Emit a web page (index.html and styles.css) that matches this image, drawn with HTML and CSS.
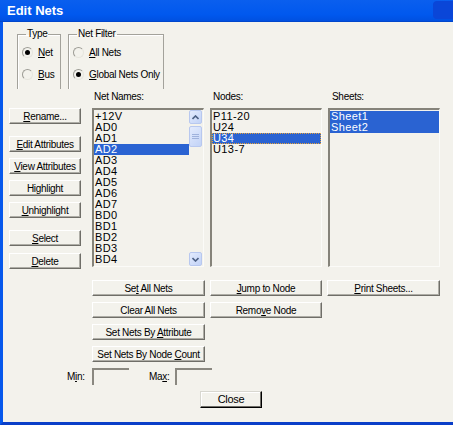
FILE: index.html
```html
<!DOCTYPE html>
<html>
<head>
  <link rel="stylesheet" href="styles.css">
</head>
<body>
  <div class="window">
    <div class="titlebar">
      <span class="title">Edit Nets</span>
      <span class="title-corner"></span>
    </div>

    <div class="client">
      <div class="filters">
        <fieldset class="group group-type">
          <legend>Type</legend>
          <label class="radio-row"><span class="radio checked"></span><span><u>N</u>et</span></label>
          <label class="radio-row"><span class="radio"></span><span><u>B</u>us</span></label>
        </fieldset>
        <fieldset class="group group-filter">
          <legend>Net Filter</legend>
          <label class="radio-row"><span class="radio"></span><span><u>A</u>ll Nets</span></label>
          <label class="radio-row"><span class="radio checked"></span><span><u>G</u>lobal Nets Only</span></label>
        </fieldset>
      </div>

      <div class="main">
        <div class="side">
          <button class="btn side-rename"><u>R</u>ename...</button>
          <button class="btn side-edit"><u>E</u>dit Attributes</button>
          <button class="btn side-view"><u>V</u>iew Attributes</button>
          <button class="btn side-highlight">Highlight</button>
          <button class="btn side-unhighlight"><u>U</u>nhighlight</button>
          <button class="btn side-select"><u>S</u>elect</button>
          <button class="btn side-delete"><u>D</u>elete</button>
        </div>

        <div class="work">
          <div class="lists">
            <div class="list-col">
              <div class="list-label">Net Names:</div>
              <div class="listbox has-scroll">
                <div class="rows">
                  <div class="row">+12V</div>
                  <div class="row">AD0</div>
                  <div class="row">AD1</div>
                  <div class="row selected">AD2</div>
                  <div class="row">AD3</div>
                  <div class="row">AD4</div>
                  <div class="row">AD5</div>
                  <div class="row">AD6</div>
                  <div class="row">AD7</div>
                  <div class="row">BD0</div>
                  <div class="row">BD1</div>
                  <div class="row">BD2</div>
                  <div class="row">BD3</div>
                  <div class="row">BD4</div>
                </div>
                <div class="scrollbar">
                  <div class="sb-btn">
                    <svg width="7" height="5" viewBox="0 0 7 5"><path d="M0.5 4 L3.5 1 L6.5 4" fill="none" stroke="#4d6185" stroke-width="1.6"/></svg>
                  </div>
                  <div class="sb-thumb">
                    <svg width="7" height="6" viewBox="0 0 7 6"><path d="M0 0.5H7M0 2.5H7M0 4.5H7" stroke="#9fb2dc" stroke-width="1"/></svg>
                  </div>
                  <div class="sb-track"></div>
                  <div class="sb-btn">
                    <svg width="7" height="5" viewBox="0 0 7 5"><path d="M0.5 1 L3.5 4 L6.5 1" fill="none" stroke="#4d6185" stroke-width="1.6"/></svg>
                  </div>
                </div>
              </div>
            </div>
            <div class="list-col">
              <div class="list-label">Nodes:</div>
              <div class="listbox">
                <div class="rows">
                  <div class="row">P11-20</div>
                  <div class="row">U24</div>
                  <div class="row selected focused">U34</div>
                  <div class="row">U13-7</div>
                </div>
              </div>
            </div>
            <div class="list-col">
              <div class="list-label">Sheets:</div>
              <div class="listbox">
                <div class="rows">
                  <div class="row selected">Sheet1</div>
                  <div class="row selected">Sheet2</div>
                </div>
              </div>
            </div>
          </div>

          <div class="actions">
            <button class="btn">Se<u>t</u> All Nets</button>
            <button class="btn"><u>J</u>ump to Node</button>
            <button class="btn"><u>P</u>rint Sheets...</button>
            <button class="btn">Clear All Nets</button>
            <button class="btn">Remo<u>v</u>e Node</button>
            <span></span>
            <button class="btn">Set Nets By <u>A</u>ttribute</button>
            <span></span><span></span>
            <button class="btn">Set Nets By Node <u>C</u>ount</button>
          </div>
        </div>
      </div>

      <div class="range">
        <span class="range-label">M<u>i</u>n:</span>
        <div class="edit"></div>
        <span class="range-label range-max">Ma<u>x</u>:</span>
        <div class="edit"></div>
      </div>

      <div class="footer">
        <button class="btn btn-default">Close</button>
      </div>
    </div>
  </div>
</body>
</html>
```

FILE: styles.css
```css
* {
  box-sizing: border-box;
  margin: 0;
  padding: 0;
}

body {
  width: 453px;
  height: 425px;
  overflow: hidden;
  font-family: "Liberation Sans", Arial, sans-serif;
  font-size: 10px;
  letter-spacing: -0.3px;
  color: #000;
  background: #f3f2ec;
}

.window {
  width: 453px;
  height: 425px;
  display: flex;
  flex-direction: column;
}

/* title bar */
.titlebar {
  height: 22px;
  flex: 0 0 22px;
  position: relative;
  background: linear-gradient(#0a5fee 0%, #0058ee 70%, #0050e0 100%);
  border-bottom: 1px solid #0046cc;
  display: flex;
  align-items: center;
}

.title {
  margin-left: 7px;
  color: #fff;
  font-weight: bold;
  font-size: 13px;
  letter-spacing: 0;
}

.title-corner {
  position: absolute;
  right: 0;
  top: 1px;
  width: 20px;
  height: 18px;
  background: #0a46d8;
  border-radius: 4px 0 0 4px;
}

/* client area */
.client {
  flex: 1;
  border-left: 3px solid #0658ec;
  border-bottom: 3px solid #0a3ec8;
  padding-left: 6px;
}

.filters {
  display: flex;
  gap: 7px;
  margin: 6px 0 0 8px;
  height: 61px;
}

.group {
  border: 1px solid #a3a29b;
  border-bottom: none;
  box-shadow: inset 1px 1px 0 #fff;
  padding: 6px 0 0 4px;
}

.group legend {
  margin-left: 4px;
  padding: 0 1px;
  line-height: 12px;
}

.group-type {
  width: 44px;
}

.group-filter {
  width: 96px;
}

.radio-row {
  display: flex;
  align-items: center;
  gap: 5px;
  height: 12px;
  margin-bottom: 10px;
  white-space: nowrap;
}

.radio {
  flex: 0 0 11px;
  width: 11px;
  height: 11px;
  border-radius: 50%;
  border: 1px solid #9d9c95;
  border-right-color: #e6e5de;
  border-bottom-color: #e6e5de;
  position: relative;
}

.radio.checked::after {
  content: "";
  position: absolute;
  left: 2px;
  top: 2px;
  width: 5px;
  height: 5px;
  border-radius: 50%;
  background: #000;
}

/* main */
.main {
  display: flex;
  gap: 11px;
}

.side {
  width: 72px;
  display: flex;
  flex-direction: column;
  padding-top: 19px;
}

.btn {
  font-family: "Liberation Sans", Arial, sans-serif;
  font-size: 10px;
  letter-spacing: -0.3px;
  height: 16px;
  line-height: 13px;
  background: #f3f2ec;
  color: #000;
  border: 1px solid;
  border-color: #fff #6f6e68 #6f6e68 #fff;
  box-shadow: inset -1px -1px 0 #aeada6;
  text-align: center;
  white-space: nowrap;
  overflow: hidden;
}

.side-edit { margin-top: 12px; }
.side-view,
.side-highlight,
.side-unhighlight { margin-top: 6px; }
.side-select { margin-top: 12px; }
.side-delete { margin-top: 7px; }

.work {
  width: 350px;
}

.lists {
  display: flex;
  gap: 6px;
}

.list-col {
  width: 112px;
}

.list-label {
  height: 12px;
  line-height: 12px;
  padding-left: 2px;
  margin-top: 2px;
  margin-bottom: 5px;
}

.list-col:nth-child(2) .list-label { padding-left: 3px; }
.list-col:nth-child(3) .list-label { padding-left: 4px; }

.listbox {
  height: 159px;
  border: 2px solid;
  border-color: #85837a #fbfbf8 #fbfbf8 #85837a;
  border-width: 2px 1px 1px 2px;
  display: flex;
  overflow: hidden;
}

.rows {
  flex: 1;
  padding-top: 1px;
  font-size: 11px;
  letter-spacing: 0.4px;
}

.row {
  height: 11px;
  line-height: 11px;
  padding-left: 1px;
  white-space: nowrap;
}

.row.selected {
  background: #2a63d2;
  color: #fff;
}

.row.focused {
  outline: 1px dotted #e6a23a;
  outline-offset: -1px;
}

/* scrollbar */
.scrollbar {
  width: 13px;
  margin-right: 1px;
  display: flex;
  flex-direction: column;
}

.sb-btn,
.sb-thumb {
  height: 14px;
  border: 1px solid #b8c8ef;
  border-radius: 2px;
  background: linear-gradient(135deg, #e3ebfd, #c2d3f7);
  display: flex;
  align-items: center;
  justify-content: center;
}

.sb-thumb {
  height: 21px;
  margin-top: 2px;
}

.sb-track {
  flex: 1;
}

.actions {
  display: grid;
  grid-template-columns: 113px 112px 113px;
  grid-auto-rows: 16px;
  column-gap: 5px;
  row-gap: 6px;
  margin-top: 13px;
}

.range {
  display: flex;
  align-items: center;
  margin: 6px 0 0 58px;
  height: 17px;
}

.range-label {
  width: 25px;
}

.range-max {
  margin-left: 20px;
  width: 26px;
}

.edit {
  width: 37px;
  height: 17px;
  border-top: 2px solid #8a8880;
  border-left: 2px solid #8a8880;
}

.footer {
  margin: 6px 0 0 191px;
}

.btn-default {
  width: 62px;
  height: 17px;
  font-size: 11px;
  border: 1px solid #000;
  border-color: #d8d7d0 #000 #000 #d8d7d0;
  box-shadow: inset -1px -1px 0 #6f6e68, inset 1px 1px 0 #fff;
}
```
